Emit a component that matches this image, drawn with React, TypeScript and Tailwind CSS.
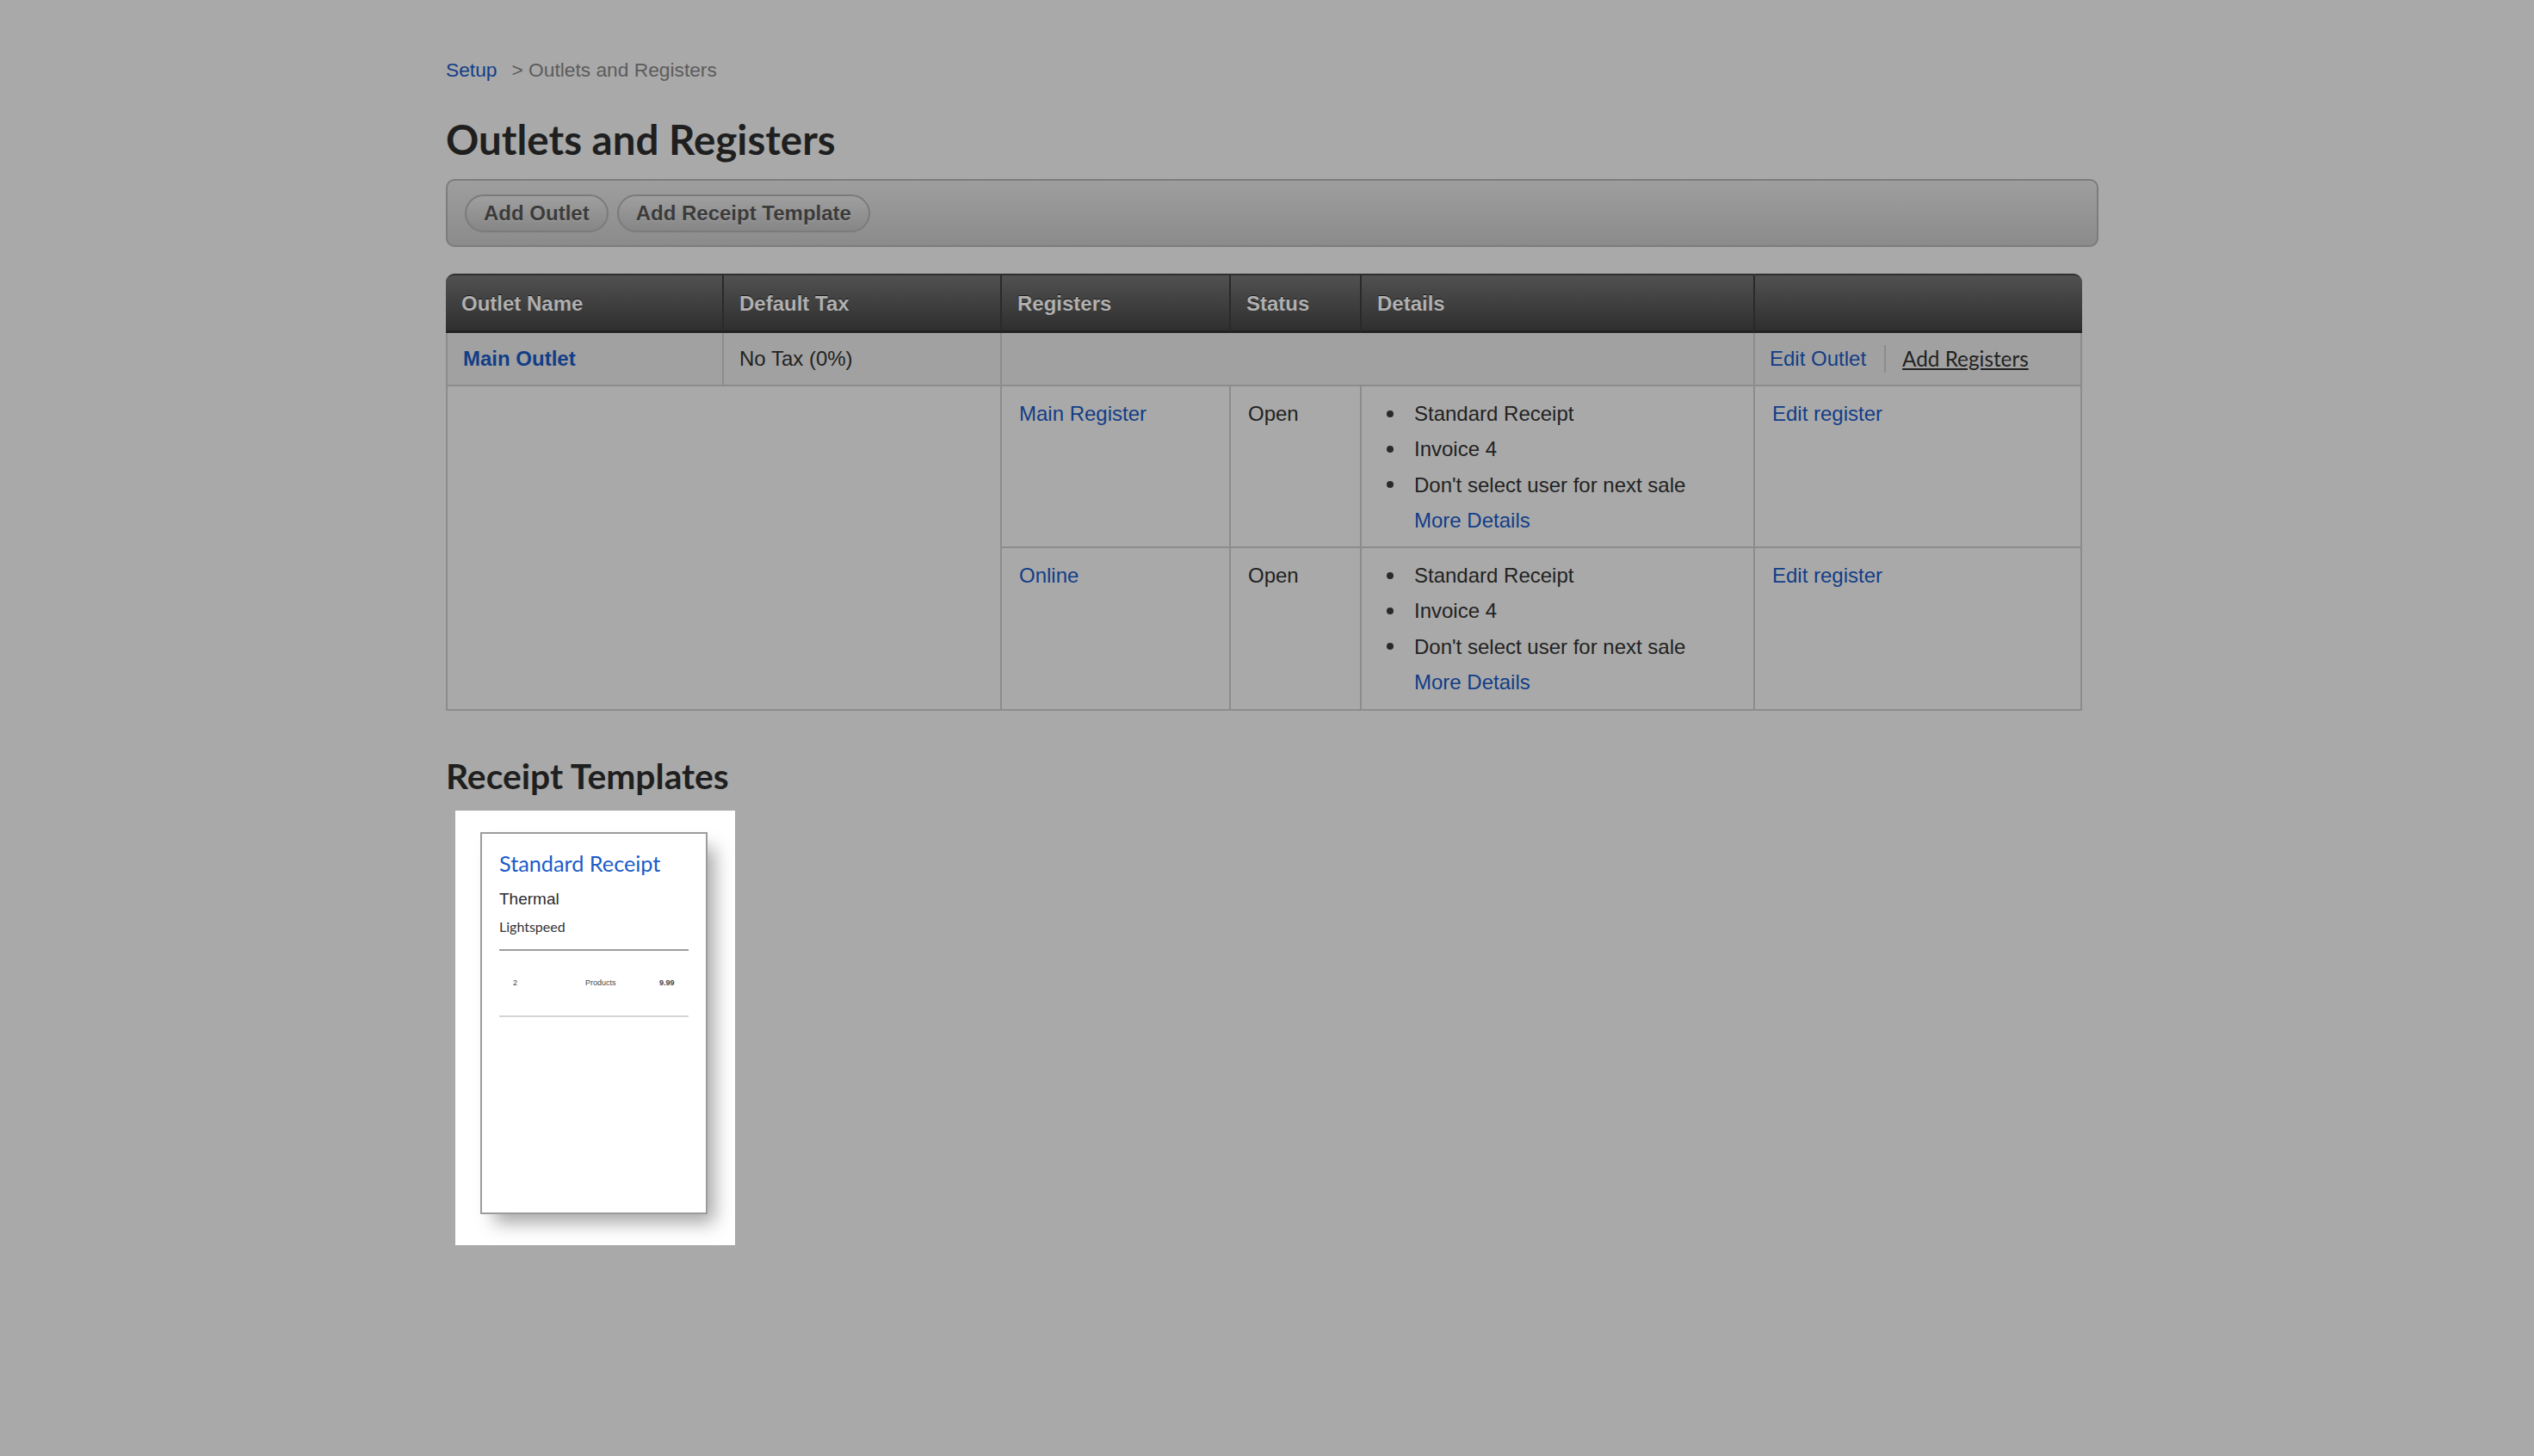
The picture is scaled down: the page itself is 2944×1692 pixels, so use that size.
import React from "react";

const helv = "font-['Liberation_Sans',Arial,sans-serif]";
const lato = "font-['Lato',sans-serif]";
const link = "text-[#123d87]";

const headers = ["Outlet Name", "Default Tax", "Registers", "Status", "Details", ""];

function ToolbarButton({ children }: { children: React.ReactNode }) {
  return (
    <button className="h-[44px] rounded-[22px] border-2 border-[#7b7b7b] bg-gradient-to-b from-[#9f9f9f] to-[#868686] px-[20px] text-[24px] font-bold text-[#3b3b3b] [text-shadow:0_1px_0_rgba(255,255,255,0.25)]">
      {children}
    </button>
  );
}

function Bullet({ children }: { children: React.ReactNode }) {
  return (
    <li className="flex items-center">
      <span className="ml-[29px] mr-[24px] size-[8px] rounded-full bg-[#2a2a2a]" />
      {children}
    </li>
  );
}

function RegisterRow({ name, first }: { name: string; first?: boolean }) {
  return (
    <tr>
      {first && <td rowSpan={2} colSpan={2} className="border-b-2 border-l-2 border-[#8c8c8c]" />}
      <td className={`${first ? "h-[188px]" : "h-[189px]"} border-b-2 border-l-2 border-[#8c8c8c] px-[20px] pt-[14px] align-top`}>
        <a className={link}>{name}</a>
      </td>
      <td className="border-b-2 border-l-2 border-[#8c8c8c] px-[20px] pt-[14px] align-top">Open</td>
      <td className="border-b-2 border-l-2 border-[#8c8c8c] pt-[11px] align-top">
        <ul className="leading-[41.3px]">
          <Bullet>Standard Receipt</Bullet>
          <Bullet>Invoice 4</Bullet>
          <Bullet>Don't select user for next sale</Bullet>
          <li className="pl-[61px]">
            <a className={link}>More Details</a>
          </li>
        </ul>
      </td>
      <td className="border-x-2 border-b-2 border-[#8c8c8c] px-[20px] pt-[14px] align-top">
        <a className={link}>Edit register</a>
      </td>
    </tr>
  );
}

export default function App() {
  return (
    <div className={`min-h-screen bg-[#a9a9a9] pl-[518px] pt-[66px] text-[#222] ${helv}`}>
      <div className="w-[1920px]">
        <div className="flex gap-[17px] text-[22.75px] leading-[30px] text-[#5c5c5c]">
          <a className={link}>Setup</a>
          <span>&gt; Outlets and Registers</span>
        </div>
        <h1 className={`mt-[34px] text-[47.5px] font-bold leading-[64px] text-[#1f1f1f] ${lato}`}>Outlets and Registers</h1>
        <div className="mt-[14px] flex h-[79px] items-center gap-[10px] rounded-[10px] border-2 border-[#7c7c7c] bg-gradient-to-b from-[#9e9e9e] to-[#8b8b8b] pl-[20px]">
          <ToolbarButton>Add Outlet</ToolbarButton>
          <ToolbarButton>Add Receipt Template</ToolbarButton>
        </div>

        <table className="mt-[31px] w-[1901px] table-fixed border-separate border-spacing-0 text-[24px]">
          <colgroup>
            <col className="w-[321px]" />
            <col className="w-[323px]" />
            <col className="w-[266px]" />
            <col className="w-[152px]" />
            <col className="w-[457px]" />
            <col className="w-[382px]" />
          </colgroup>
          <thead>
            <tr>
              {headers.map((h, i) => (
                <th
                  key={i}
                  className={`h-[69px] border-b-[3px] border-t-2 border-b-[#222] border-t-[#2e2e2e] bg-gradient-to-b from-[#515151] to-[#2f2f2f] pl-[18px] pt-[2px] text-left font-bold text-[#b0b0b0] [text-shadow:0_-1px_0_rgba(0,0,0,0.7)] ${i > 0 ? "border-l-2 border-l-[#2a2a2a]" : "rounded-tl-[10px]"} ${i === 5 ? "rounded-tr-[10px]" : ""}`}
                >
                  {h}
                </th>
              ))}
            </tr>
          </thead>
          <tbody>
            <tr className="bg-[#a1a1a1]">
              <td className="h-[62px] border-b-2 border-l-2 border-[#8c8c8c] pl-[18px] font-bold">
                <a className={link}>Main Outlet</a>
              </td>
              <td className="border-b-2 border-l-2 border-[#8c8c8c] pl-[18px]">No Tax (0%)</td>
              <td colSpan={3} className="border-b-2 border-l-2 border-[#8c8c8c]" />
              <td className="border-x-2 border-b-2 border-[#8c8c8c] pl-[17px]">
                <div className="flex items-center">
                  <a className={link}>Edit Outlet</a>
                  <span className="ml-[21px] h-[32px] w-[2px] bg-[#8c8c8c]" />
                  <a className={`ml-[19px] text-[24.3px] underline ${lato}`}>Add Registers</a>
                </div>
              </td>
            </tr>
            <RegisterRow name="Main Register" first />
            <RegisterRow name="Online" />
          </tbody>
        </table>

        <h2 className={`mt-[49px] text-[40.8px] font-bold leading-[54px] text-[#1f1f1f] ${lato}`}>Receipt Templates</h2>
        <div className="ml-[11px] mt-[13px] w-[325px] bg-white pb-[36px] pl-[29px] pt-[25px]">
          <div className="h-[444px] w-[264px] border-2 border-[#9c9c9c] bg-white pl-[20px] pr-[20px] pt-[17px] shadow-[12px_14px_20px_-4px_rgba(0,0,0,0.35)]">
            <div className={`text-[25.25px] leading-[34px] text-[#1a5bc8] ${lato}`}>Standard Receipt</div>
            <div className="mt-[12px] text-[19px] leading-[26px] text-[#2b2b2b]">Thermal</div>
            <div className={`mt-[8px] text-[16px] leading-[22px] text-[#333] ${lato}`}>Lightspeed</div>
            <div className="mt-[15px] grid h-[79px] grid-cols-[84px_86px_1fr] items-center border-b-2 border-t-2 border-b-[#d5d5d5] border-t-[#9c9c9c] pl-[16px] text-[9px] text-[#444]">
              <span>2</span>
              <span>Products</span>
              <span className="font-bold">9.99</span>
            </div>
          </div>
        </div>
      </div>
    </div>
  );
}
